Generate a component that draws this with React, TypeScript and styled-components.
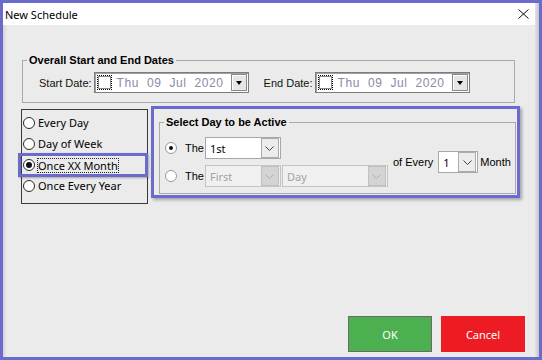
import styled, { createGlobalStyle } from "styled-components"

const GlobalStyle = createGlobalStyle`
  html, body {
    margin: 0;
    padding: 0;
  }
  body {
    width: 542px;
    height: 360px;
    overflow: hidden;
    font-family: "Liberation Sans", Arial, sans-serif;
    font-size: 11px;
    color: #000;
  }
`

const PURPLE = "#6b6bcb"

const Frame = styled.div`
  width: 542px;
  height: 360px;
  box-sizing: border-box;
  padding: 3px;
  background: ${PURPLE};
  display: flex;
`

const Window = styled.div`
  flex: 1;
  display: flex;
`

const Main = styled.div`
  flex: 1;
  display: flex;
  flex-direction: column;
`

const Edge = styled.div`
  width: 4px;
  background: linear-gradient(to right, #e2e2e2, #c8c8c8);
`

const TitleBar = styled.div`
  height: 22px;
  background: #fff;
  display: flex;
  align-items: center;
  justify-content: space-between;
  padding: 0 6px 0 2px;
  font-family: "Noto Sans", sans-serif;
  font-size: 11px;
  color: #000;
`

const CloseIcon = () => (
  <svg width="11" height="10" viewBox="0 0 11 10">
    <path d="M0.5 0.5 L10.5 9.5 M10.5 0.5 L0.5 9.5" stroke="#111" strokeWidth="1" fill="none" />
  </svg>
)

const Body = styled.div`
  flex: 1;
  display: flex;
  flex-direction: column;
  background: #ebebeb;
  box-shadow: inset 4px 0 3px -2px rgba(0, 0, 0, 0.1);
  padding-top: 27px;
`

const Group = styled.fieldset<{ $width: number }>`
  margin: 0;
  width: ${(p) => p.$width}px;
  box-sizing: border-box;
  border: 1px solid #a9a9a9;
  padding: 0;
  min-width: 0;
`

const Legend = styled.legend`
  margin-left: 4px;
  padding: 0 2px;
  font-weight: bold;
  font-size: 11px;
  line-height: 16px;
`

const DatesGroup = styled(Group)`
  margin-left: 19px;
`

const DateRow = styled.div`
  display: flex;
  align-items: center;
  padding: 4px 0 9px 16px;
`

const FieldLabel = styled.span<{ $gap?: number }>`
  margin-left: ${(p) => p.$gap ?? 0}px;
  margin-right: 2px;
  color: #111;
`

const Picker = styled.div`
  width: 155px;
  height: 21px;
  box-sizing: border-box;
  background: #fff;
  border: 1px solid #7c7c7c;
  box-shadow: inset 1px 1px 0 #a0a0a0;
  display: flex;
  align-items: center;
  padding: 0 1px 0 2px;
`

const FocusBox = styled.span`
  display: flex;
  padding: 1px;
  outline: 1px dotted #000;
  outline-offset: -1px;
`

const CheckBox = styled.span`
  width: 13px;
  height: 13px;
  box-sizing: border-box;
  border: 1px solid #8a8a8a;
  background: #fff;
`

const DateText = styled.span`
  flex: 1;
  margin-left: 5px;
  font-size: 12px;
  letter-spacing: 0.6px;
  word-spacing: 4px;
  color: #8a8aa8;
  white-space: nowrap;
`

const DropButton = styled.span`
  width: 16px;
  height: 17px;
  box-sizing: border-box;
  background: #e6e6e6;
  border: 1px solid #8a8a8a;
  box-shadow: inset 1px 1px 0 #fff;
  display: flex;
  align-items: center;
  justify-content: center;
`

const Triangle = styled.span`
  width: 0;
  height: 0;
  border-left: 3.5px solid transparent;
  border-right: 3.5px solid transparent;
  border-top: 4px solid #000;
`

const DatePicker = () => (
  <Picker>
    <FocusBox>
      <CheckBox />
    </FocusBox>
    <DateText>Thu 09 Jul 2020</DateText>
    <DropButton>
      <Triangle />
    </DropButton>
  </Picker>
)

const Row = styled.div`
  display: flex;
  align-items: flex-start;
  gap: 3px;
  margin: 3px 0 0 18px;
`

const ModeList = styled.div`
  width: 127px;
  height: 95px;
  box-sizing: border-box;
  margin-top: 3px;
  border: 1px solid #3a3a3a;
  padding-top: 2px;
  display: flex;
  flex-direction: column;
  font-family: "Noto Sans", sans-serif;
  font-size: 11px;
`

const ModeItem = styled.div<{ $selected?: boolean }>`
  display: flex;
  align-items: center;
  gap: 3px;
  height: 21px;
  box-sizing: border-box;
  padding-left: 1px;
  ${(p) =>
    p.$selected &&
    `
    height: 24px;
    margin: -1px -1px -2px -4px;
    padding-left: 2px;
    border: 3px solid ${PURPLE};
    box-shadow: 1px 1px 2px rgba(0, 0, 0, 0.3);
  `}
`

const Radio = styled.span<{ $checked?: boolean; $soft?: boolean }>`
  width: 12px;
  height: 12px;
  box-sizing: border-box;
  border-radius: 50%;
  border: 1px solid ${(p) => (p.$soft ? "#9a9a9a" : "#2a2a2a")};
  background: #fff;
  display: flex;
  align-items: center;
  justify-content: center;
  flex-shrink: 0;
  &::after {
    content: "";
    width: ${(p) => (p.$soft ? 4 : 6)}px;
    height: ${(p) => (p.$soft ? 4 : 6)}px;
    border-radius: 50%;
    background: ${(p) => (p.$checked ? "#111" : "transparent")};
  }
`

const FocusText = styled.span`
  outline: 1px dotted #222;
  outline-offset: 0;
  line-height: 13px;
`

const Highlight = styled.div`
  width: 369px;
  box-sizing: border-box;
  border: 3px solid ${PURPLE};
  padding: 5px 1px 1px 5px;
  box-shadow: 2px 2px 3px rgba(0, 0, 0, 0.3);
`

const DayContent = styled.div`
  display: flex;
  align-items: center;
  padding: 7px 0 6px 5px;
`

const Options = styled.div`
  display: flex;
  flex-direction: column;
  gap: 6px;
`

const OptionRow = styled.div`
  display: flex;
  align-items: center;
`

const OptionLabel = styled.span`
  margin: 0 1px 0 8px;
  font-size: 11px;
`

const Select = styled.div<{ $width: number; $disabled?: boolean; $gap?: number }>`
  width: ${(p) => p.$width}px;
  height: 22px;
  margin-left: ${(p) => p.$gap ?? 0}px;
  box-sizing: border-box;
  border: 1px solid ${(p) => (p.$disabled ? "#c4c4c4" : "#a8a8a8")};
  background: ${(p) => (p.$disabled ? "#f0f0f0" : "#fff")};
  color: ${(p) => (p.$disabled ? "#a2a2a2" : "#000")};
  display: flex;
  align-items: center;
  padding: 0 1px 0 4px;
  font-family: "Noto Sans", sans-serif;
  font-size: 11px;
`

const SelectValue = styled.span`
  flex: 1;
`

const ArrowBox = styled.span<{ $disabled?: boolean }>`
  width: 18px;
  height: 20px;
  box-sizing: border-box;
  border: 1px solid ${(p) => (p.$disabled ? "#c0c0c0" : "#acacac")};
  background: ${(p) => (p.$disabled ? "#d4d4d4" : "#ececec")};
  display: flex;
  align-items: center;
  justify-content: center;
`

const Chevron = ({ color }: { color: string }) => (
  <svg width="9" height="5" viewBox="0 0 9 5">
    <polyline points="0.5,0.5 4.5,4.5 8.5,0.5" stroke={color} strokeWidth="1" fill="none" />
  </svg>
)

const DropDown = ({ value, width, disabled, gap }: { value: string; width: number; disabled?: boolean; gap?: number }) => (
  <Select $width={width} $disabled={disabled} $gap={gap}>
    <SelectValue>{value}</SelectValue>
    <ArrowBox $disabled={disabled}>
      <Chevron color={disabled ? "#b0b0b0" : "#444"} />
    </ArrowBox>
  </Select>
)

const EveryLabel = styled.span<{ $left: number; $right: number }>`
  margin: 0 ${(p) => p.$right}px 0 ${(p) => p.$left}px;
  font-size: 11px;
`

const Spacer = styled.div`
  flex: 1;
`

const Footer = styled.div`
  display: flex;
  justify-content: flex-end;
  gap: 9px;
  padding: 0 10px 5px 0;
`

const Button = styled.button<{ $tone: "ok" | "cancel" }>`
  width: 84px;
  height: 36px;
  box-sizing: border-box;
  border: ${(p) => (p.$tone === "ok" ? "1px solid #6a6a6a" : "none")};
  background: ${(p) => (p.$tone === "ok" ? "#4caf50" : "#ed1c24")};
  color: #fff;
  font-family: "Noto Sans", sans-serif;
  font-size: 11px;
  padding: 0;
`

export default function App() {
  return (
    <>
      <GlobalStyle />
      <Frame>
        <Window>
          <Main>
            <TitleBar>
              <span>New Schedule</span>
              <CloseIcon />
            </TitleBar>
            <Body>
              <DatesGroup $width={493}>
                <Legend>Overall Start and End Dates</Legend>
                <DateRow>
                  <FieldLabel>Start Date:</FieldLabel>
                  <DatePicker />
                  <FieldLabel $gap={15}>End Date:</FieldLabel>
                  <DatePicker />
                </DateRow>
              </DatesGroup>
              <Row>
                <ModeList>
                  <ModeItem>
                    <Radio />
                    <span>Every Day</span>
                  </ModeItem>
                  <ModeItem>
                    <Radio />
                    <span>Day of Week</span>
                  </ModeItem>
                  <ModeItem $selected>
                    <Radio $checked />
                    <FocusText>Once XX Month</FocusText>
                  </ModeItem>
                  <ModeItem>
                    <Radio />
                    <span>Once Every Year</span>
                  </ModeItem>
                </ModeList>
                <Highlight>
                  <Group $width={357}>
                    <Legend>Select Day to be Active</Legend>
                    <DayContent>
                      <Options>
                        <OptionRow>
                          <Radio $checked $soft />
                          <OptionLabel>The</OptionLabel>
                          <DropDown value="1st" width={76} />
                        </OptionRow>
                        <OptionRow>
                          <Radio $soft />
                          <OptionLabel>The</OptionLabel>
                          <DropDown value="First" width={76} disabled />
                          <DropDown value="Day" width={106} disabled gap={1} />
                        </OptionRow>
                      </Options>
                      <EveryLabel $left={5} $right={5}>of Every</EveryLabel>
                      <DropDown value="1" width={40} />
                      <EveryLabel $left={2} $right={0}>Month</EveryLabel>
                    </DayContent>
                  </Group>
                </Highlight>
              </Row>
              <Spacer />
              <Footer>
                <Button $tone="ok">OK</Button>
                <Button $tone="cancel">Cancel</Button>
              </Footer>
            </Body>
          </Main>
          <Edge />
        </Window>
      </Frame>
    </>
  )
}
